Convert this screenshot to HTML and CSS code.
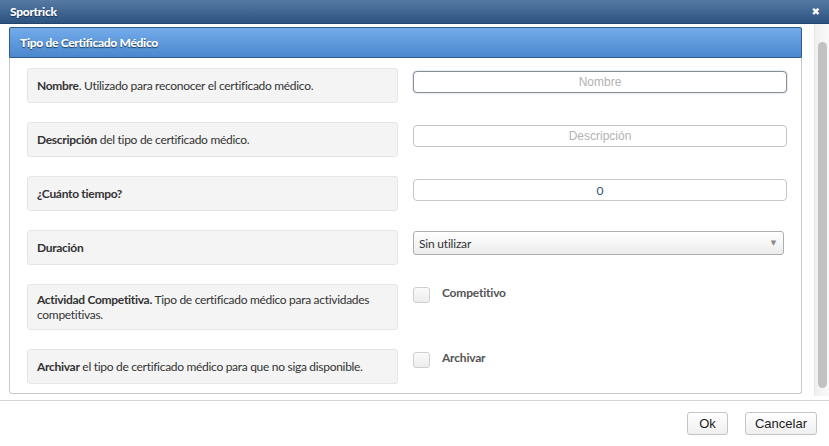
FILE: index.html
```html
<!DOCTYPE html>
<html lang="es">
<head>
<meta charset="utf-8">
<title>Sportrick</title>
<link rel="stylesheet" href="styles.css">
</head>
<body>
<div class="dialog">
  <div class="titlebar">
    <span class="title">Sportrick</span>
    <span class="close">&#x2716;</span>
  </div>
  <div class="main">
    <div class="content">
      <div class="panel">
        <div class="panel-header">Tipo de Certificado Médico</div>
        <div class="panel-body">
          <div class="label"><span><b>Nombre</b>. Utilizado para reconocer el certificado médico.</span></div>
          <div class="field"><input class="text focus" type="text" placeholder="Nombre"></div>

          <div class="label"><span><b>Descripción</b> del tipo de certificado médico.</span></div>
          <div class="field"><input class="text" type="text" placeholder="Descripción"></div>

          <div class="label"><span><b>¿Cuánto tiempo?</b></span></div>
          <div class="field"><input class="text num" type="text" value="0"></div>

          <div class="label"><span><b>Duración</b></span></div>
          <div class="field sel"><div class="select"><span>Sin utilizar</span><span class="arrow">&#9660;</span></div></div>

          <div class="label tall"><span><b>Actividad Competitiva.</b> <span>Tipo de certificado médico para actividades</span> <span>competitivas.</span></span></div>
          <div class="field chk"><span class="box"></span><span class="chk-label">Competitivo</span></div>

          <div class="label"><span><b>Archivar</b> el tipo de certificado médico para que no siga disponible.</span></div>
          <div class="field chk"><span class="box"></span><span class="chk-label">Archivar</span></div>
        </div>
      </div>
    </div>
    <div class="scrollbar"><div class="thumb"></div></div>
  </div>
  <div class="footer">
    <button class="btn ok">Ok</button>
    <button class="btn cancel">Cancelar</button>
  </div>
</div>
</body>
</html>
```
FILE: styles.css
```css
* { box-sizing: border-box; }
html, body { margin: 0; padding: 0; background: #fff; }
body { width: 829px; height: 446px; overflow: hidden; font-family: "Lato", "Open Sans", sans-serif; }

.titlebar {
  height: 24px;
  background: linear-gradient(#557aa3, #2c5281);
  border-bottom: 1px solid #22456f;
  display: flex;
  align-items: center;
  justify-content: space-between;
  padding: 0 9px 0 10px;
}
.title {
  color: #fff;
  font-weight: 900;
  font-size: 12px;
  letter-spacing: -0.3px;
  text-shadow: 0 1px 1px #1b3556;
}
.close { color: #fff; font-size: 10px; font-family: "DejaVu Sans", sans-serif; }

.main { display: flex; height: 372px; }
.content { width: 814px; padding: 3px 0 0 9px; }
.scrollbar {
  width: 15px;
  background: linear-gradient(90deg, #f0f0f0, #fafafa);
  border-left: 1px solid #e6e6e6;
  padding: 18px 2px 0 3px;
}
.thumb { height: 346px; background: #c2c2c2; border-radius: 5px; }

.panel {
  width: 793px;
  height: 367px;
  border: 1px solid #c9c9c9;
  border-top: none;
  border-radius: 3px;
}
.panel-header {
  height: 31px;
  background: linear-gradient(#74acea, #4a87cd);
  border: 1px solid #2e5b90;
  border-radius: 2px 2px 0 0;
  margin: 0 -1px;
  color: #fff;
  font-weight: 900;
  font-size: 12px;
  letter-spacing: -0.3px;
  line-height: 29px;
  padding-left: 10px;
  text-shadow: 0 1px 1px #1c3e66;
}
.panel-body {
  display: grid;
  grid-template-columns: 371px 374px;
  column-gap: 15px;
  row-gap: 19px;
  padding: 10px 0 0 17px;
}
.label {
  min-height: 35px;
  background: #f4f4f4;
  border: 1px solid #e5e5e5;
  border-radius: 3px;
  padding: 6px 9px 7px;
  display: flex;
  align-items: center;
  font-size: 12px;
  letter-spacing: -0.3px;
  line-height: 15px;
  color: #333;
}
.label b { color: #333; }
.label.tall { min-height: 46px; }

.field { padding-top: 3px; }
.text {
  display: block;
  width: 374px;
  height: 22px;
  border: 1px solid #c6c6c6;
  border-radius: 4px;
  text-align: center;
  font-family: "Liberation Sans", Arial, sans-serif;
  font-size: 12px;
  color: #333;
  padding: 0 6px;
  outline: none;
  background: #fff;
}
.text::placeholder { color: #b3b3b3; }
.text.focus { border-color: #8d8d8d; box-shadow: 0 0 2px #9cb8dc; }
.text.num { font-family: "Lato", sans-serif; color: #2e4f7a; }

.field.sel { padding-top: 1px; }
.select {
  width: 371px;
  height: 24px;
  border: 1px solid #adadad;
  border-radius: 3px;
  background: linear-gradient(#fff, #ececec);
  display: flex;
  align-items: center;
  justify-content: space-between;
  padding: 0 7px 0 5px;
  font-size: 12px;
  letter-spacing: -0.2px;
  color: #333;
}
.arrow { font-size: 7px; color: #888; font-family: "DejaVu Sans", sans-serif; }

.field.chk { display: flex; align-items: flex-start; padding-top: 2px; }
.box {
  width: 17px;
  height: 16px;
  border: 1px solid #cfcfcf;
  border-radius: 3px;
  background: linear-gradient(#fafafa, #ededed);
  margin-top: 1px;
}
.chk-label {
  margin-left: 12px;
  font-weight: bold;
  font-size: 12px;
  letter-spacing: -0.2px;
  color: #555;
  line-height: 14px;
}

.footer {
  margin-top: 4px;
  border-top: 1px solid #d3d3d3;
  display: flex;
  justify-content: flex-end;
  gap: 17px;
  padding: 11px 12px 0 0;
}
.btn {
  height: 23px;
  border: 1px solid #c4c4c4;
  border-radius: 3px;
  background: linear-gradient(#fff, #efefef);
  font-family: "Liberation Sans", Arial, sans-serif;
  font-size: 13px;
  color: #222;
  padding: 0;
}
.ok { width: 41px; }
.cancel { width: 72px; }
```
